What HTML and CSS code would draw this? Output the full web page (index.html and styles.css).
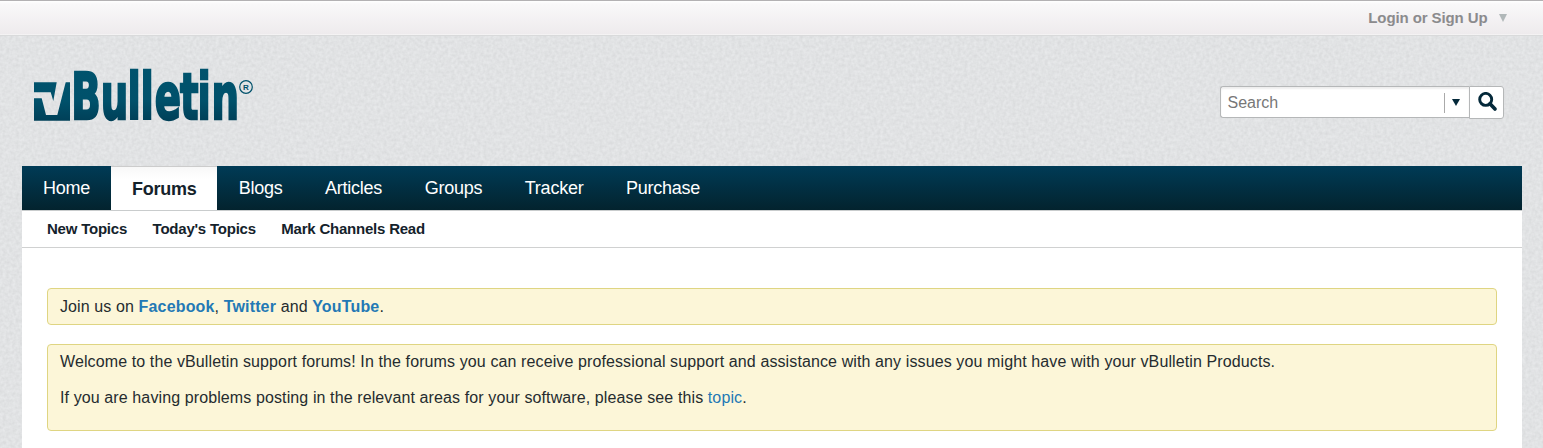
FILE: index.html
```html
<!DOCTYPE html>
<html lang="en">
<head>
<meta charset="utf-8">
<title>vBulletin Community Forum</title>
<link rel="stylesheet" href="styles.css">
</head>
<body>
<svg class="texture" aria-hidden="true">
  <filter id="paper" x="0" y="0" width="100%" height="100%" color-interpolation-filters="sRGB">
    <feTurbulence type="fractalNoise" baseFrequency="0.31" numOctaves="2" seed="12"/>
    <feColorMatrix values="0.080 0 0 0 0.842  0.080 0 0 0 0.848  0.080 0 0 0 0.854  0 0 0 0 1"/>
  </filter>
  <rect width="100%" height="100%" filter="url(#paper)"/>
</svg>
<div class="topbar"><a class="login">Login or Sign Up<span class="arrow"></span></a></div>
<header class="header">
  <svg class="logo" width="232" height="64" viewBox="0 0 232 64" role="img" aria-label="vBulletin">
    <defs>
      <linearGradient id="ink" gradientUnits="userSpaceOnUse" x1="0" y1="0" x2="0" y2="57">
        <stop offset="0" stop-color="#00536d"/><stop offset=".6" stop-color="#00516b"/><stop offset="1" stop-color="#003e56"/>
      </linearGradient>
    </defs>
    <path fill="url(#ink)" d="M4 16.200H26.700L23.300 35 20.700 26.300H4ZM4 32.300H11.700L16 49H27.300L35.700 16.200H40V54.700H4Z"/>
    <text class="wordmark" fill="url(#ink)" stroke="url(#ink)" transform="scale(.61 1)" y="53.300" x="67.600 115.800 159.800 181.200 204.600 245.800 274.600 297.600">Bulletin</text>
    <circle cx="216" cy="21" r="6.300" fill="none" stroke="#00516b" stroke-width="1.200"/>
    <text class="reg" x="213.100" y="24" fill="#00516b">R</text>
  </svg>
  <div class="search">
    <div class="field"><span class="hint">Search</span><span class="drop"><i></i></span></div>
    <div class="go"><svg width="20" height="20" viewBox="0 0 20 20"><circle cx="7.700" cy="7.400" r="6" fill="none" stroke="#04293a" stroke-width="2.900"/><path d="M12 11.800L17 17" stroke="#04293a" stroke-width="3.700" stroke-linecap="round"/></svg></div>
  </div>
</header>
<main class="page">
  <nav class="nav"><a class="home">Home</a><a class="active">Forums</a><a class="blogs">Blogs</a><a>Articles</a><a>Groups</a><a>Tracker</a><a>Purchase</a></nav>
  <div class="subnav"><a>New Topics</a><a>Today's Topics</a><a>Mark Channels Read</a></div>
  <div class="notices">
    <section class="notice join"><p>Join us on <a><b>Facebook</b></a>, <a><b>Twitter</b></a> and <a><b>YouTube</b></a>.</p></section>
    <section class="notice welcome"><p>Welcome to the vBulletin support forums! In the forums you can receive professional support and assistance with any issues you might have with your vBulletin Products.</p><p>If you are having problems posting in the relevant areas for your software, please see this <a>topic</a>.</p></section>
  </div>
</main>
</body>
</html>
```

FILE: styles.css
```css
* { box-sizing: border-box; }
body { margin: 0; height: 448px; overflow: hidden; background: #e0e2e4; font-family: "Liberation Sans", Arial, sans-serif; color: #252c2f; }
.texture { position: absolute; inset: 0; z-index: -1; width: 100%; height: 100%; }
.topbar { height: 36px; border-top: 1px solid #b3b1b3; border-bottom: 1px solid #d9dadb; background: linear-gradient(#fff 0, #f9f8f9 3px, #eeebed 33px, #fafafa 34px); display: flex; justify-content: flex-end; padding-right: 36px; }
.login { display: flex; align-items: center; height: 33px; font-size: 15px; font-weight: bold; letter-spacing: -.1px; color: #8b8b8d; }
.arrow { margin: 1px 0 0 11.500px; border: 4.5px solid transparent; border-top: 8px solid #b1b8b9; border-bottom: 0; }
.header { height: 130px; padding: 30px 39px 0 30px; display: flex; justify-content: space-between; }
.logo { display: block; overflow: visible; }
.wordmark { font: bold 63.5px "DejaVu Sans", sans-serif; stroke-width: 2.4px; }
.reg { font: bold 8px "Liberation Sans", sans-serif; }
.search { display: flex; padding-top: 20px; }
.field { width: 249px; height: 32px; padding: 1px 0 0 6.500px; border: 1px solid #b5b7b8; border-right: 0; border-radius: 3px 0 0 3px; background: #fff; box-shadow: inset 0 2px 2px #eee; display: flex; align-items: center; justify-content: space-between; font-size: 16px; color: #777; }
.drop { width: 25px; height: 20px; border-left: 1px solid #aaa; display: flex; align-items: center; padding-left: 7px; }
.drop i { border: 4.5px solid transparent; border-top: 7px solid #04293a; border-bottom: 0; }
.go { width: 35px; height: 33px; border: 1px solid #b5b7b8; border-radius: 0 3px 3px 0; background: #fff; padding: 5px 0 0 8px; }
.go svg { display: block; }
.page { width: 1500px; height: 282px; margin-left: 22px; background: #fff; }
.nav { height: 44px; display: flex; background: linear-gradient(#003b56, #03232e); color: #fff; font-size: 18px; line-height: 44px; letter-spacing: -.25px; }
.nav a { padding: 0 21.300px; }
.nav .home { width: 89px; padding: 0 0 0 21px; }
.nav .active { width: 106px; padding: 0 0 0 21px; border-top: 1px solid #ccc; background: linear-gradient(#f8f8f8, #fff 12px); color: #14222b; font-weight: bold; }
.nav .blogs { padding-left: 21.700px; }
.subnav { height: 38px; border-top: 1px solid #c9cccd; border-bottom: 1px solid #d0d1d1; padding-left: 25px; display: flex; gap: 25.500px; font-size: 15px; font-weight: bold; line-height: 36px; letter-spacing: -.22px; color: #14222b; }
.notices { padding: 40px 25px 0; display: flex; flex-direction: column; gap: 19px; }
.notice { border: 1px solid #dfd582; border-radius: 4px; background: #fcf6d8; padding: 8px 12px; font-size: 16px; line-height: 18px; letter-spacing: .11px; }
.join { height: 37px; padding-top: 9px; letter-spacing: .11px; }
.notice b { letter-spacing: .16px; }
.welcome { height: 87px; }
.notice p { margin: 0 0 18px; white-space: nowrap; }
.notice a { color: #2379b5; }
```
